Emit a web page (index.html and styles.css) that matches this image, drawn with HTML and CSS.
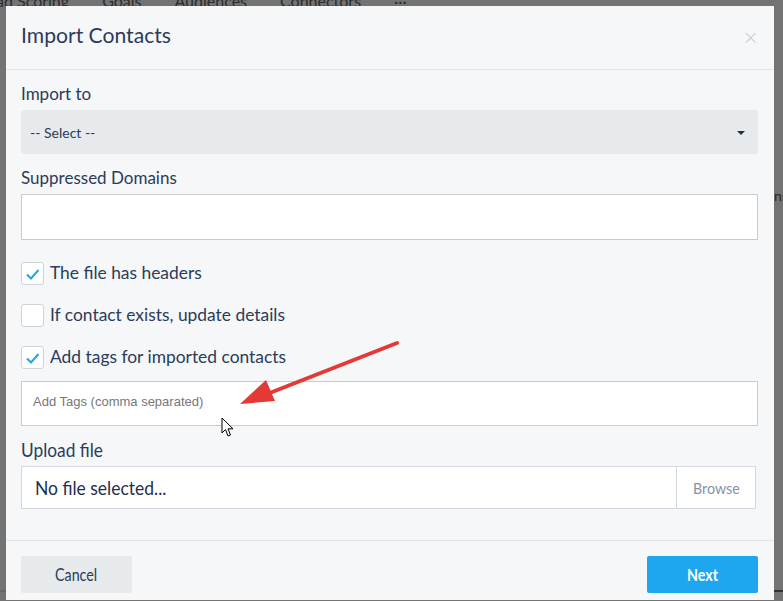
FILE: index.html
```html
<!DOCTYPE html>
<html>
<head>
<meta charset="utf-8">
<link rel="stylesheet" href="styles.css">
</head>
<body>
<div class="page">
  <div class="nav"><span>ad Scoring</span><span>Goals</span><span>Audiences</span><span>Connectors</span><span>···</span></div>
  <div class="side-frag">ns</div>
  <div class="bottom-strip"><i class="s1"></i><i class="s2"></i><i class="s3"></i><i class="s2"></i><i class="s3 orange"></i><i class="s2 fill"></i></div>
</div>
<div class="overlay"></div>
<div class="modal">
  <div class="modal-header">
    <h1 class="title"><span class="cond">Import Contacts</span></h1>
    <span class="close">×</span>
  </div>
  <div class="modal-body">
    <label class="label">Import to</label>
    <div class="select"><span>-- Select --</span><span class="caret"></span></div>
    <label class="label label-2">Suppressed Domains</label>
    <div class="textbox"></div>
    <div class="check-row first">
      <span class="box"><svg viewBox="0 0 23 23" width="23" height="23"><path d="M6 12.5 L10 16.5 L17.5 8" fill="none" stroke="#1ea5ec" stroke-width="2"/></svg></span>
      <span class="check-label">The file has headers</span>
    </div>
    <div class="check-row">
      <span class="box"></span>
      <span class="check-label">If contact exists, update details</span>
    </div>
    <div class="check-row">
      <span class="box"><svg viewBox="0 0 23 23" width="23" height="23"><path d="M6 12.5 L10 16.5 L17.5 8" fill="none" stroke="#1ea5ec" stroke-width="2"/></svg></span>
      <span class="check-label">Add tags for imported contacts</span>
    </div>
    <div class="tags">Add Tags (comma separated)</div>
    <label class="label label-3"><span class="cond c-upload">Upload file</span></label>
    <div class="file">
      <div class="file-name"><span class="cond c-file">No file selected...</span></div>
      <div class="browse"><span class="cond c-browse">Browse</span></div>
    </div>
  </div>
  <div class="modal-footer">
    <button class="btn cancel"><span class="cond c-btn">Cancel</span></button>
    <button class="btn next"><span class="cond c-btn">Next</span></button>
  </div>
</div>
<svg class="arrow" width="200" height="90" viewBox="0 0 200 90">
  <line x1="159" y1="4" x2="24" y2="57" stroke="#e53935" stroke-width="4" stroke-linecap="round"/>
  <polygon points="2,65 28,41 37,62" fill="#e53935"/>
</svg>
<svg class="cursor" width="16" height="22" viewBox="0 0 16 22">
  <path d="M1 1 L1 16 L4.5 12.5 L7 19 L9.5 18 L7 11.8 L12 11.8 Z" fill="#fff" stroke="#000" stroke-width="1"/>
</svg>
</body>
</html>
```
FILE: styles.css
```css
* { box-sizing: border-box; }
html, body { margin: 0; padding: 0; }
body {
  width: 783px;
  height: 601px;
  overflow: hidden;
  position: relative;
  background: #ececec;
  font-family: "Lato", "Liberation Sans", sans-serif;
}
.page { width: 783px; height: 601px; position: relative; }
.nav {
  display: flex;
  font-size: 16px;
  color: #333;
  margin-top: -9px;
  height: 20px;
}
.nav span { margin-right: 33px; }
.nav span:first-child { margin-left: -4px; }
.side-frag {
  position: absolute;
  left: 774px;
  top: 196px;
  font-size: 14px;
  color: #222;
}
.bottom-strip {
  position: absolute;
  left: 0;
  bottom: 0;
  width: 783px;
  height: 2px;
  display: flex;
}
.bottom-strip i { display: block; height: 2px; }
.bottom-strip .s1 { width: 68px; background: #cfcfcf; }
.bottom-strip .s2 { width: 165px; background: #4a4432; }
.bottom-strip .s3 { width: 32px; background: #a07020; }
.bottom-strip .orange { background: #d06a10; }
.bottom-strip .fill { flex: 1; }
.overlay {
  position: absolute;
  inset: 0;
  background: rgba(40, 40, 40, 0.62);
}
.modal {
  position: absolute;
  left: 6px;
  top: 6px;
  width: 768px;
  height: 594px;
  background: #f6f7f9;
  display: flex;
  flex-direction: column;
}
.cond {
  display: inline-block;
  transform: scaleX(0.9);
  transform-origin: left center;
  white-space: nowrap;
}
.modal-header {
  height: 64px;
  border-bottom: 1px solid #e1e4e8;
  display: flex;
  align-items: center;
  justify-content: space-between;
  padding: 0 15px;
}
.title {
  margin: 0;
  font-size: 22px;
  line-height: 26px;
  font-weight: 400;
  color: #2a3c5a;
  margin-top: -6px;
}
.title .cond { transform: scaleX(0.96); }
.close {
  font-family: "DejaVu Sans", sans-serif;
  font-size: 20px;
  font-weight: 300;
  color: #c8ccd1;
  margin-right: 0;
  margin-top: -2px;
}
.modal-body {
  padding: 14px 16px 0 15px;
  display: flex;
  flex-direction: column;
  flex: 1;
}
.label {
  font-size: 17px;
  line-height: 20px;
  color: #2a3c5a;
  margin-bottom: 6px;
}
.label-2 { margin-top: 14px; }
.label-3 { margin-top: 14px; font-size: 19px; }
.c-upload { transform: scaleX(0.91); }
.select {
  height: 44px;
  background: #e7eaed;
  border-radius: 3px;
  display: flex;
  align-items: center;
  justify-content: space-between;
  padding: 0 13px 0 9px;
  font-size: 14px;
  color: #2a3c5a;
}
.caret {
  width: 0;
  height: 0;
  border-left: 4px solid transparent;
  border-right: 4px solid transparent;
  border-top: 4px solid #1f2f4a;
  margin-top: 1px;
}
.textbox {
  height: 46px;
  background: #fff;
  border: 1px solid #c9cbcd;
}
.check-row {
  display: flex;
  align-items: center;
  height: 23px;
  margin-top: 19px;
}
.check-row.first { margin-top: 22px; }
.box {
  width: 23px;
  height: 23px;
  background: #fff;
  border: 1px solid #cfd4da;
  border-radius: 3px;
  display: flex;
  align-items: center;
  justify-content: center;
  overflow: hidden;
}
.box svg { flex: none; margin: -1px; }
.check-label {
  margin-left: 6px;
  font-size: 17.4px;
  color: #2a3c5a;
  margin-top: -2px;
}
.tags {
  margin-top: 12px;
  height: 45px;
  background: #fff;
  border: 1px solid #c9cbcd;
  font-family: "Liberation Sans", Arial, sans-serif;
  font-size: 13px;
  color: #777;
  display: flex;
  align-items: center;
  padding-left: 11px;
  padding-bottom: 4px;
}
.file {
  height: 43px;
  display: flex;
  border: 1px solid #d3d8de;
  background: #fff;
  margin-right: 2px;
}
.file-name {
  flex: 1;
  display: flex;
  align-items: center;
  padding-left: 13px;
  font-size: 19px;
  color: #1f2f4a;
}
.c-file { transform: scaleX(0.92); }
.browse {
  width: 79px;
  border-left: 1px solid #d3d8de;
  display: flex;
  align-items: center;
  padding-left: 16px;
  font-size: 16px;
  color: #8393a8;
}
.c-browse { transform: scaleX(0.89); }
.modal-footer {
  border-top: 1px solid #e1e4e8;
  height: 60px;
  display: flex;
  justify-content: space-between;
  align-items: flex-start;
  padding: 15px 16px 0 15px;
}
.btn {
  width: 111px;
  height: 37px;
  border: none;
  border-radius: 2px;
  font-family: inherit;
  font-size: 17px;
  display: flex;
  align-items: center;
  justify-content: center;
  padding: 0;
}
.btn .c-btn { transform: scaleX(0.84); transform-origin: center center; }
.cancel { background: #e7eaed; color: #2a3c5a; }
.next { background: #1ea7ef; color: #fff; font-weight: 700; }
.arrow {
  position: absolute;
  left: 238px;
  top: 339px;
}
.cursor {
  position: absolute;
  left: 221px;
  top: 417px;
}
```
